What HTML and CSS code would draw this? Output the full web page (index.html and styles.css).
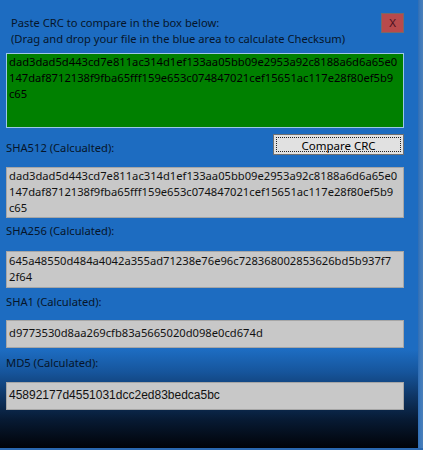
FILE: index.html
```html
<!DOCTYPE html>
<html>
<head>
<meta charset="utf-8">
<link rel="stylesheet" href="styles.css">
</head>
<body>
<div class="frame">
  <div class="window">
    <div class="header">
      <div class="intro">Paste CRC to compare in the box below:<br>(Drag and drop your file in the blue area to calculate Checksum)</div>
      <button class="close">X</button>
    </div>
    <div class="box green three">dad3dad5d443cd7e811ac314d1ef133aa05bb09e2953a92c8188a6d6a65e0<br>147daf8712138f9fba65fff159e653c074847021cef15651ac117e28f80ef5b9<br>c65</div>
    <div class="row">
      <div class="label first">SHA512 (Calcualted):</div>
      <button class="compare"><span class="focus">Compare CRC</span></button>
    </div>
    <div class="box gray three-short gap12">dad3dad5d443cd7e811ac314d1ef133aa05bb09e2953a92c8188a6d6a65e0<br>147daf8712138f9fba65fff159e653c074847021cef15651ac117e28f80ef5b9<br>c65</div>
    <div class="label l256">SHA256 (Calculated):</div>
    <div class="box gray two gap12">645a48550d484a4042a355ad71238e76e96c728368002853626bd5b937f7<br>2f64</div>
    <div class="label l1">SHA1 (Calculated):</div>
    <div class="box gray one gap10">d9773530d8aa269cfb83a5665020d098e0cd674d</div>
    <div class="label l5">MD5 (Calculated):</div>
    <div class="box gray one gap11 sans">45892177d4551031dcc2ed83bedca5bc</div>
  </div>
  <div class="edge"></div>
</div>
</body>
</html>
```
FILE: styles.css
```css
html, body {
  margin: 0;
  padding: 0;
}
body {
  width: 423px;
  height: 450px;
  overflow: hidden;
  background: #2a68b0;
}
.frame {
  display: flex;
  width: 423px;
  height: 448px;
}
.window {
  width: 418px;
  height: 448px;
  box-sizing: border-box;
  padding: 13px 14px 0 6px;
  background: linear-gradient(to bottom, #1d6cc1 0px, #1d6cc1 350px, #16559c 372px, #0f3767 395px, #071a33 420px, #010308 448px);
  font-family: "Noto Sans", sans-serif;
  font-size: 11.2px;
  line-height: 16px;
  color: #000;
}
.edge {
  width: 5px;
  height: 448px;
  background: linear-gradient(to right, #2f6db4, #3c78bb 40%, #4a7fb9);
}
.header {
  display: flex;
  justify-content: space-between;
  align-items: flex-start;
}
.intro {
  margin-top: 2px;
  padding-left: 5px;
  color: #06152a;
}
.close {
  width: 23px;
  height: 20px;
  margin: 0;
  padding: 0;
  background: #b84a4c;
  border: 1px solid #77696a;
  color: #4a1020;
  font-family: "Noto Sans", sans-serif;
  font-size: 11.5px;
  line-height: 16px;
}
.box {
  box-sizing: border-box;
  border: 1px solid #a6a6a6;
  padding: 0 2px;
  white-space: nowrap;
}
.green {
  margin-top: 6px;
  height: 75px;
  background: #008000;
  border-color: #9cc8e6;
}
.gray {
  background: #c8c8c8;
  color: #111;
}
.three-short { height: 51px; }
.two { height: 37px; padding-top: 1px; }
.one { height: 28px; padding-top: 4px; }
.gap12 { margin-top: 12px; }
.gap10 { margin-top: 10px; }
.gap11 { margin-top: 11px; }
.sans {
  font-family: "Liberation Sans", Arial, sans-serif;
  font-size: 12px;
}
.row {
  display: flex;
  justify-content: space-between;
  align-items: flex-start;
  margin-top: 6px;
  height: 21px;
}
.label {
  color: #06152a;
}
.label.first { margin-top: 6px; }
.l256 { margin-top: 5px; }
.l1 { margin-top: 6px; }
.l5 { margin-top: 7px; }
.compare {
  width: 131px;
  height: 21px;
  margin: 0;
  padding: 2px;
  box-sizing: border-box;
  background: #e1e1e1;
  border: 1px solid #707070;
  font-family: "Noto Sans", sans-serif;
  font-size: 11.5px;
  color: #000;
  display: flex;
}
.focus {
  flex: 1;
  border: 1px dotted #222;
  line-height: 15px;
  text-align: center;
}
```
